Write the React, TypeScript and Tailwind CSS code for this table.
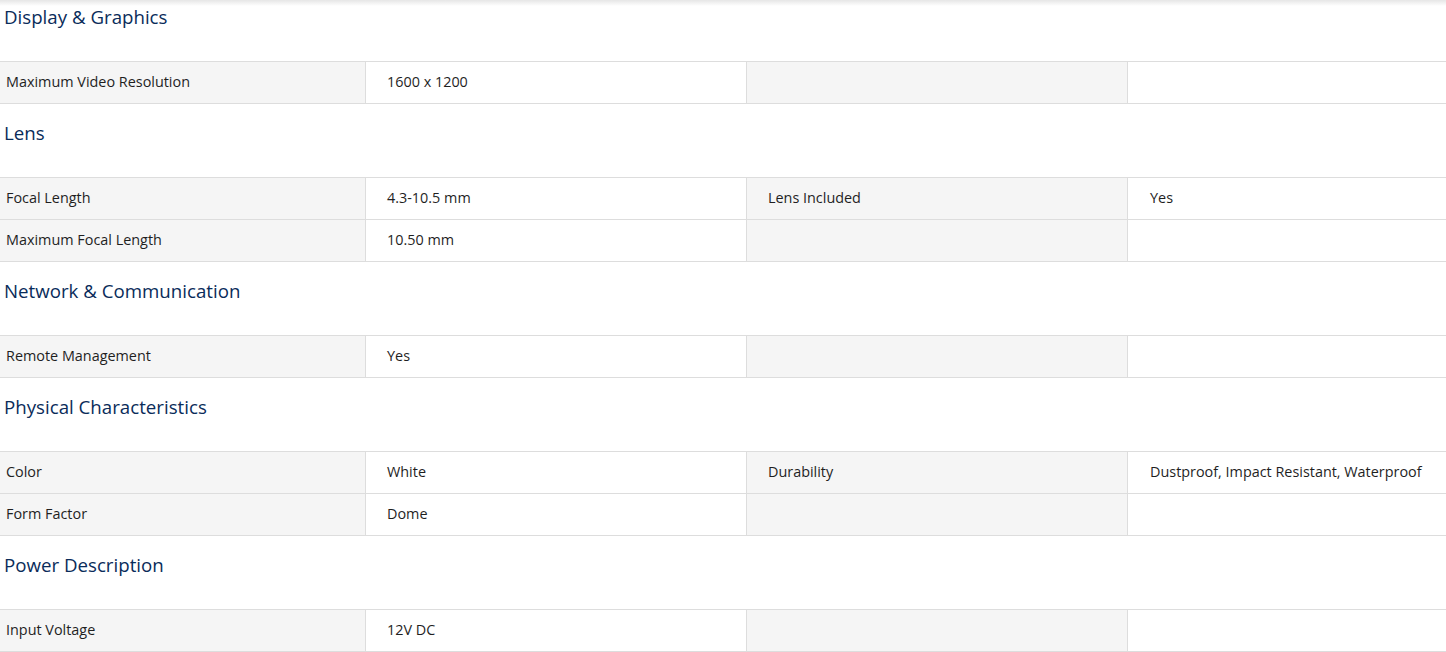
const sections = [
  {
    title: "Display & Graphics",
    rows: [["Maximum Video Resolution", "1600 x 1200", "", ""]],
  },
  {
    title: "Lens",
    rows: [
      ["Focal Length", "4.3-10.5 mm", "Lens Included", "Yes"],
      ["Maximum Focal Length", "10.50 mm", "", ""],
    ],
  },
  {
    title: "Network & Communication",
    rows: [["Remote Management", "Yes", "", ""]],
  },
  {
    title: "Physical Characteristics",
    rows: [
      ["Color", "White", "Durability", "Dustproof, Impact Resistant, Waterproof"],
      ["Form Factor", "Dome", "", ""],
    ],
  },
  {
    title: "Power Description",
    rows: [["Input Voltage", "12V DC", "", ""]],
  },
];

export default function App() {
  return (
    <div className="relative w-[1446px] h-[652px] overflow-hidden bg-white text-[#1f1f1f] font-['Open_Sans','Noto_Sans',sans-serif]">
      {/* top fade shadow from the header above */}
      <div className="absolute top-0 left-0 right-0 h-[6px] bg-gradient-to-b from-[#e6e6e6] to-transparent pointer-events-none" />
      <div className="-mt-[12px]">
        {sections.map((s) => (
          <div key={s.title}>
            <h3 className="h-[73px] pl-[4px] pt-[17px] text-[18.7px] leading-[24px] text-[#0a2c5a]">{s.title}</h3>
            <div className="border-t border-[#dddddd]">
              {s.rows.map((r, i) => (
                <div key={i} className="grid grid-cols-[366px_381px_381px_1fr] h-[42px] border-b border-[#dddddd] text-[14.4px]">
                  <div className="bg-[#f5f5f5] border-r border-[#dddddd] pl-[6px] pb-[2px] flex items-center">{r[0]}</div>
                  <div className="border-r border-[#dddddd] pl-[21px] pb-[2px] flex items-center">{r[1]}</div>
                  <div className="bg-[#f5f5f5] border-r border-[#dddddd] pl-[21px] pb-[2px] flex items-center">{r[2]}</div>
                  <div className="pl-[22px] pb-[2px] flex items-center">{r[3]}</div>
                </div>
              ))}
            </div>
          </div>
        ))}
      </div>
    </div>
  );
}
